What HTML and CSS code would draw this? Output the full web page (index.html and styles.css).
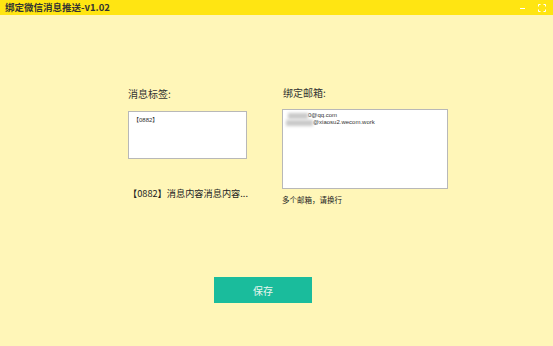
FILE: index.html
```html
<!DOCTYPE html>
<html lang="zh-CN">
<head>
    <meta charset="UTF-8">
    <title>绑定微信消息推送-v1.02</title>
    <link rel="stylesheet" href="styles.css">
</head>
<body>
    <div class="titlebar">
        <span class="title">绑定微信消息推送-v1.02</span>
        <div class="win-btns">
            <span class="win-min"></span>
            <svg class="win-max" width="8" height="8" viewBox="0 0 8 8">
                <path d="M0.5 2.5V0.5H2.5M5.5 0.5H7.5V2.5M7.5 5.5V7.5H5.5M2.5 7.5H0.5V5.5" fill="none" stroke="#fff" stroke-width="1"/>
            </svg>
        </div>
    </div>

    <div class="main">
        <div class="form">
            <div class="col col-left">
                <div class="label">消息标签:</div>
                <div class="box box-tag">【0882】</div>
                <div class="preview">【0882】消息内容消息内容...</div>
            </div>
            <div class="col col-right">
                <div class="label">绑定邮箱:</div>
                <div class="box box-mail">
                    <div class="mail-line"><span class="blur b1"></span>0@qq.com</div>
                    <div class="mail-line"><span class="blur b2"></span>@xiaosu2.wecom.work</div>
                </div>
                <div class="hint">多个邮箱，请换行</div>
            </div>
        </div>
        <div class="actions">
            <button class="save">保存</button>
        </div>
    </div>
</body>
</html>
```

FILE: styles.css
```css
html, body {
    margin: 0;
    padding: 0;
}
body {
    width: 553px;
    height: 346px;
    overflow: hidden;
    background: #fff6b8;
    font-family: "Noto Sans CJK SC", "Liberation Sans", sans-serif;
    color: #222;
}
.titlebar {
    height: 15px;
    background: #ffe512;
    display: flex;
    align-items: center;
    justify-content: space-between;
    padding: 0 7px 0 5px;
}
.title {
    font-size: 9.5px;
    font-weight: bold;
    color: #333;
    line-height: 15px;
}
.win-btns {
    display: flex;
    align-items: center;
    gap: 13px;
}
.win-min {
    width: 5px;
    height: 1px;
    background: #fff;
    margin-top: 2px;
}
.main {
    padding-top: 72px;
}
.form {
    display: flex;
    padding-left: 128px;
}
.col-left {
    width: 154px;
}
.label {
    font-size: 10px;
    line-height: 14px;
    color: #333;
}
.col-right .label {
    margin-top: -1px;
    margin-left: 1px;
}
.box {
    background: #fff;
    border: 1px solid #b8b8b8;
    box-sizing: border-box;
    font-family: "Liberation Sans", "Noto Sans CJK SC", sans-serif;
    font-size: 6px;
    color: #333;
    padding: 3px 4px;
}
.box-tag {
    width: 119px;
    height: 48px;
    margin-top: 10px;
}
.preview {
    margin-top: 27px;
    font-size: 9.2px;
    line-height: 14px;
    color: #222;
}
.box-mail {
    width: 166px;
    height: 80px;
    margin-top: 9px;
    padding: 2px 3px;
}
.mail-line {
    display: flex;
    align-items: center;
    height: 7px;
    line-height: 7px;
}
.blur {
    display: inline-block;
    height: 6px;
    background: #c9c9c9;
    filter: blur(1.5px);
}
.b1 {
    width: 20px;
    margin-left: 2px;
}
.b2 {
    width: 27px;
}
.hint {
    margin-top: 5px;
    font-size: 7.5px;
    line-height: 11px;
    color: #222;
}
.actions {
    display: flex;
    padding-left: 214px;
    margin-top: 72px;
}
.save {
    width: 98px;
    height: 26px;
    border: none;
    background: #1abc9c;
    color: #e8f6ee;
    font-family: "Noto Sans CJK SC", sans-serif;
    font-size: 10px;
    padding: 0;
}
```
